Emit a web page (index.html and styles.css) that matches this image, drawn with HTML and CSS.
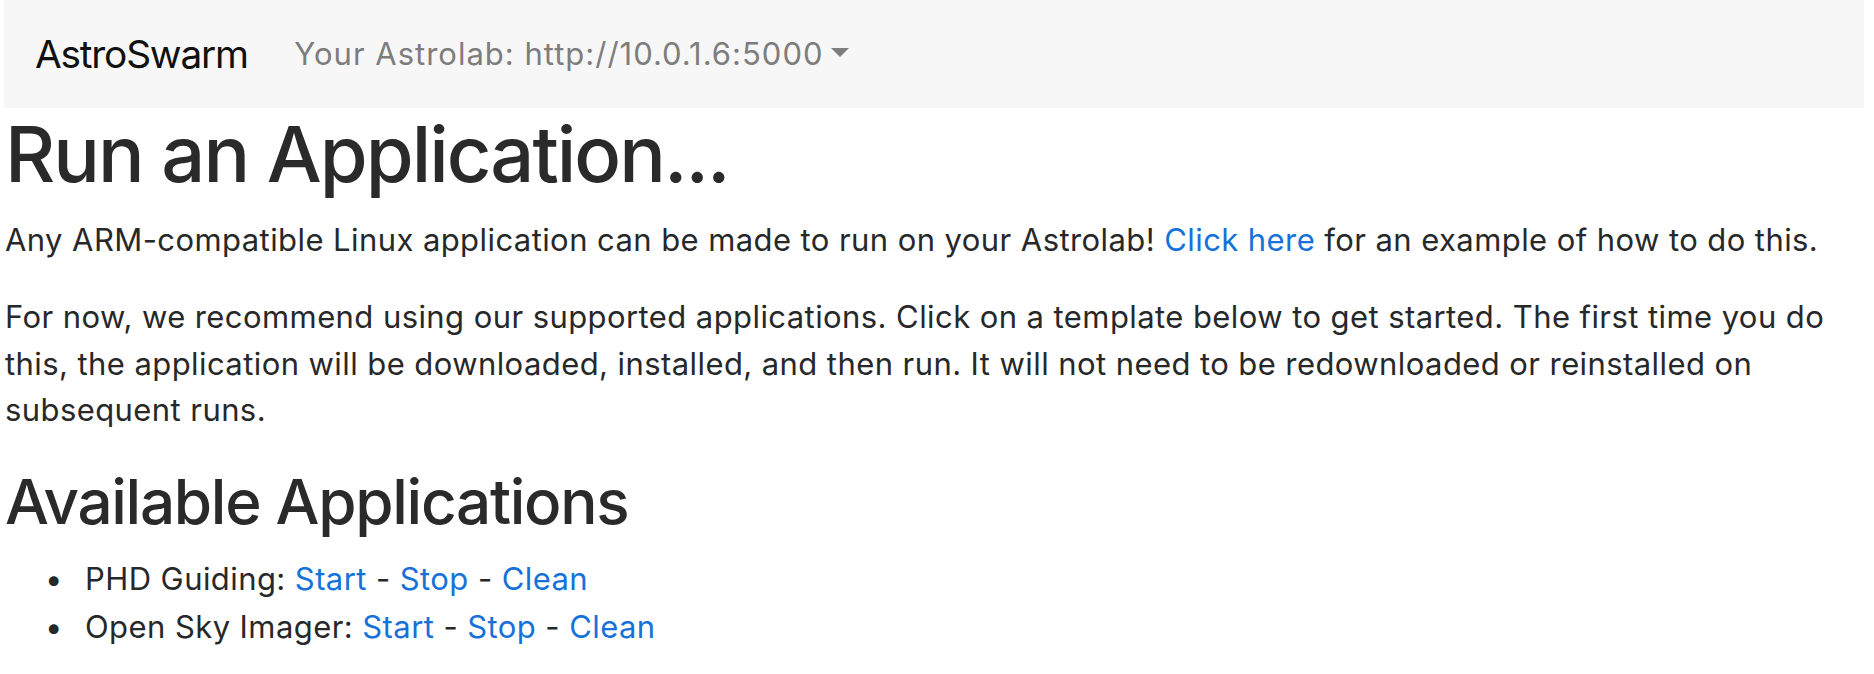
FILE: index.html
```html
<!DOCTYPE html>
<html lang="en">
<head>
<meta charset="utf-8">
<title>AstroSwarm</title>
<link rel="stylesheet" href="styles.css">
</head>
<body>
<div class="page">
  <nav class="navbar">
    <a class="brand" href="#">AstroSwarm</a>
    <a class="nav-link" href="#">Your Astrolab: http://10.0.1.6:5000<span class="caret"></span></a>
  </nav>
  <main class="content">
    <h1>Run an Application...</h1>
    <p>Any ARM-compatible Linux application can be made to run on your Astrolab! <a href="#">Click here</a> for an example of how to do this.</p>
    <p>For now, we recommend using our supported applications. Click on a template below to get started. The first time you do this, the application will be downloaded, installed, and then run. It will not need to be redownloaded or reinstalled on subsequent runs.</p>
    <h2>Available Applications</h2>
    <ul class="apps">
      <li>PHD Guiding: <a href="#">Start</a> - <a href="#">Stop</a> - <a href="#">Clean</a></li>
      <li>Open Sky Imager: <a href="#">Start</a> - <a href="#">Stop</a> - <a href="#">Clean</a></li>
    </ul>
  </main>
</div>
</body>
</html>
```

FILE: styles.css
```css
html {
  font-size: 31px;
}
body {
  margin: 0;
  background: #fff;
  color: #272829;
  font-family: Inter, "Liberation Sans", sans-serif;
  font-size: 1rem;
  line-height: 1.5;
  letter-spacing: 0.42px;
}
.page {
  padding: 0 10px 0 4px;
}
.navbar {
  display: flex;
  align-items: center;
  background: #f7f7f7;
  padding: 15.5px 31px;
  height: 77px;
}
.brand {
  color: #111;
  text-decoration: none;
  font-size: 38.8px;
  line-height: 1.5;
  letter-spacing: -1.2px;
  margin-right: 31px;
}
.nav-link {
  color: #7d7d7d;
  text-decoration: none;
  padding: 0 15.5px;
  letter-spacing: 1px;
}
.caret {
  display: inline-block;
  margin-left: 0.255em;
  vertical-align: 0.255em;
  border-top: 0.3em solid;
  border-left: 0.3em solid transparent;
  border-right: 0.3em solid transparent;
}
.content {
  padding-left: 1px;
}
h1, h2 {
  font-weight: 500;
  line-height: 1.2;
  margin: 0 0 15.5px;
  color: #2a2a2b;
}
h1 {
  font-size: 77.6px;
  letter-spacing: -2px;
}
h2 {
  font-size: 62px;
  letter-spacing: -1.3px;
}
p {
  margin: 0 0 31px;
}
.apps {
  margin: 0;
  padding-left: 80px;
  list-style: none;
}
.apps li {
  line-height: 48px;
}
.apps li::before {
  content: "\2022";
  display: inline-block;
  width: 40px;
  margin-left: -40px;
}
a {
  color: #1672d9;
  text-decoration: none;
}
```
